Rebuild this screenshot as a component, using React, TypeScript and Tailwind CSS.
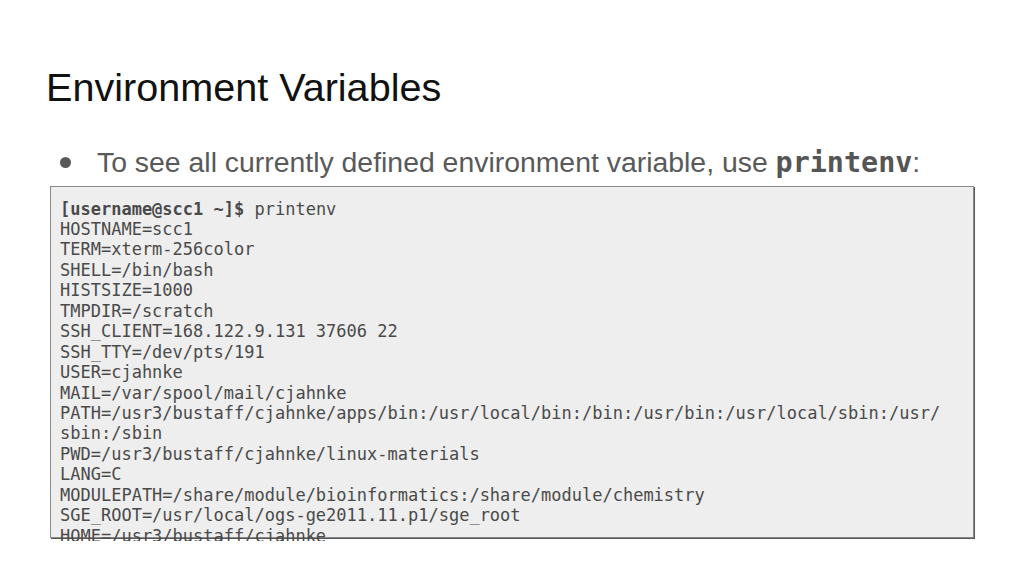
const lines = [
  "HOSTNAME=scc1",
  "TERM=xterm-256color",
  "SHELL=/bin/bash",
  "HISTSIZE=1000",
  "TMPDIR=/scratch",
  "SSH_CLIENT=168.122.9.131 37606 22",
  "SSH_TTY=/dev/pts/191",
  "USER=cjahnke",
  "MAIL=/var/spool/mail/cjahnke",
  "PATH=/usr3/bustaff/cjahnke/apps/bin:/usr/local/bin:/bin:/usr/bin:/usr/local/sbin:/usr/",
  "sbin:/sbin",
  "PWD=/usr3/bustaff/cjahnke/linux-materials",
  "LANG=C",
  "MODULEPATH=/share/module/bioinformatics:/share/module/chemistry",
  "SGE_ROOT=/usr/local/ogs-ge2011.11.p1/sge_root",
  "HOME=/usr3/bustaff/cjahnke",
]

const mono = "font-['DejaVu_Sans_Mono','Liberation_Mono',monospace]"

export default function App() {
  return (
    <div className="w-[1024px] h-[576px] bg-white overflow-hidden font-['Liberation_Sans',Arial,sans-serif]">
      {/* Title */}
      <h1 className="pt-[64px] pl-[46px] text-[39.6px] leading-[46px] text-[#111]">
        Environment Variables
      </h1>

      {/* Bullet */}
      <div className="mt-[35px] flex items-center h-[34px] pl-[60px] text-[28.4px] leading-[34px] text-[#595959]">
        <span className="w-[11px] h-[11px] rounded-full bg-[#595959] shrink-0" />
        <span className="ml-[26px] whitespace-nowrap">
          To see all currently defined environment variable, use{" "}
          <span className={`${mono} font-bold text-[#555]`}>printenv</span>:
        </span>
      </div>

      {/* Terminal output */}
      <div className="mt-[7px] ml-[50px] w-[925px] h-[355px] overflow-hidden">
        <div className="w-[924px] h-[352px] border border-[#8a8a8a] bg-[#eeeeee] shadow-[1px_1px_0_#555] pl-[9px] pt-[11.5px]">
          <div className={`${mono} text-[17px] leading-[20.45px] text-[#4a4a4a]`}>
            <div className="whitespace-pre">
              <span className="font-bold">[username@scc1 ~]$</span> printenv
            </div>
            {lines.map((l, i) => (
              <div key={i} className="whitespace-pre">{l}</div>
            ))}
          </div>
        </div>
      </div>
    </div>
  )
}
